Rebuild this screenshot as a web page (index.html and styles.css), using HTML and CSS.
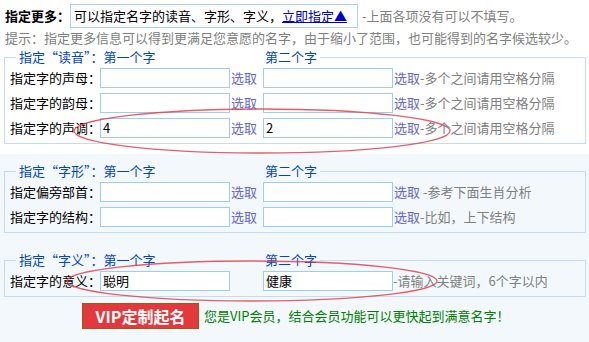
FILE: index.html
```html
<!DOCTYPE html>
<html lang="zh-CN">
<head>
<meta charset="utf-8">
<title>指定更多</title>
<link rel="stylesheet" href="styles.css">
</head>
<body>
<div class="page">
  <div class="more-row">
    <span class="more-label">指定更多：</span>
    <span class="more-box">可以指定名字的读音、字形、字义，<a class="now-link" href="#">立即指定▲</a></span>
    <span class="note more-note">-上面各项没有可以不填写。</span>
  </div>
  <div class="hint">提示：指定更多信息可以得到更满足您意愿的名字，由于缩小了范围，也可能得到的名字候选较少。</div>

  <fieldset class="group">
    <legend class="group-title"><span class="title-first">指定“读音”：第一个字</span><span>第二个字</span></legend>
    <div class="field-row">
      <span class="field-label">指定字的声母：</span>
      <input class="field-input" type="text">
      <span class="pick-slot">选取</span>
      <input class="field-input" type="text">
      <span class="pick">选取</span><span class="note">-多个之间请用空格分隔</span>
    </div>
    <div class="field-row">
      <span class="field-label">指定字的韵母：</span>
      <input class="field-input" type="text">
      <span class="pick-slot">选取</span>
      <input class="field-input" type="text">
      <span class="pick">选取</span><span class="note">-多个之间请用空格分隔</span>
    </div>
    <div class="field-row">
      <span class="field-label">指定字的声调：</span>
      <input class="field-input" type="text" value="4">
      <span class="pick-slot">选取</span>
      <input class="field-input" type="text" value="2">
      <span class="pick">选取</span><span class="note">-多个之间请用空格分隔</span>
    </div>
  </fieldset>

  <fieldset class="group group-next">
    <legend class="group-title"><span class="title-first">指定“字形”：第一个字</span><span>第二个字</span></legend>
    <div class="field-row">
      <span class="field-label">指定偏旁部首：</span>
      <input class="field-input" type="text">
      <span class="pick-slot">选取</span>
      <input class="field-input" type="text">
      <span class="pick">选取</span><span class="note">&nbsp;-参考下面生肖分析</span>
    </div>
    <div class="field-row">
      <span class="field-label">指定字的结构：</span>
      <input class="field-input" type="text">
      <span class="pick-slot">选取</span>
      <input class="field-input" type="text">
      <span class="pick">选取</span><span class="note">-比如，上下结构</span>
    </div>
  </fieldset>

  <fieldset class="group group-next">
    <legend class="group-title"><span class="title-first">指定“字义”：第一个字</span><span>第二个字</span></legend>
    <div class="field-row">
      <span class="field-label">指定字的意义：</span>
      <input class="field-input" type="text" value="聪明">
      <span class="pick-slot"></span>
      <input class="field-input" type="text" value="健康">
      <span class="note">-请输入关键词，6个字以内</span>
    </div>
  </fieldset>

  <div class="submit-row">
    <button class="vip-button" type="button">VIP定制起名</button>
    <span class="vip-tip">您是VIP会员，结合会员功能可以更快起到满意名字！</span>
  </div>

  <svg class="marks" width="589" height="342" viewBox="0 0 589 342" aria-hidden="true">
    <ellipse cx="262" cy="127" rx="188" ry="22" />
    <ellipse cx="252" cy="277" rx="185" ry="20" />
  </svg>
</div>
</body>
</html>
```

FILE: styles.css
```css
html, body {
  margin: 0;
  padding: 0;
}

body {
  font: 13px/14px "Noto Sans CJK SC", "Liberation Sans", sans-serif;
  color: #000;
  background: linear-gradient(#ffffff 0, #ffffff 154px, #f3f8fd 154px);
  width: 589px;
  height: 342px;
  overflow: hidden;
}

.page {
  position: relative;
  width: 589px;
  height: 342px;
}

.more-row {
  display: flex;
  align-items: center;
  height: 24px;
  margin-top: 4px;
  padding-left: 5px;
  white-space: nowrap;
}

.more-label {
  font-weight: bold;
  width: 65px;
  flex: none;
}

.more-box {
  box-sizing: border-box;
  display: flex;
  align-items: center;
  width: 288px;
  height: 24px;
  padding-left: 3px;
  border: 1px solid #a9d1ec;
  flex: none;
}

.now-link {
  color: #0000cc;
  text-decoration: underline;
}

.note {
  color: #808080;
  white-space: nowrap;
}

.more-note {
  margin-left: 4px;
}

.hint {
  color: #808080;
  padding-left: 5px;
  margin-top: 3px;
  height: 14px;
  white-space: nowrap;
}

.group {
  margin: 5px 3px 0 4px;
  padding: 1px 5px 3px;
  border: 1px solid #c6dbef;
  min-width: 0;
}

.group-next {
  margin-top: 20px;
}

.group-title {
  margin-left: 6px;
  padding: 0 3px;
  color: #0044cc;
  line-height: 14px;
  white-space: nowrap;
  font-feature-settings: "fwid" 1;
}

.title-first {
  display: inline-block;
  width: 246px;
}

.field-row {
  display: flex;
  align-items: center;
  height: 25px;
  white-space: nowrap;
}

.field-label {
  width: 90px;
  flex: none;
}

.field-input {
  box-sizing: border-box;
  width: 130px;
  height: 20px;
  margin: 0;
  padding: 0 2px;
  border: 1px solid #9dcdf7;
  background: #fff;
  font: 13px "Noto Sans CJK SC", "Liberation Sans", sans-serif;
  color: #000;
  flex: none;
  outline: none;
}

.pick-slot {
  box-sizing: border-box;
  width: 33px;
  padding-left: 1px;
  color: #6666cc;
  flex: none;
}

.pick {
  margin-left: 1px;
  color: #6666cc;
}

.submit-row {
  display: flex;
  align-items: center;
  margin-top: 6px;
  padding-left: 82px;
}

.vip-button {
  box-sizing: border-box;
  width: 117px;
  height: 26px;
  margin: 0;
  padding: 0;
  border: 1px solid #9b5b14;
  background: #e4393c;
  color: #fff;
  font: bold 16px/24px "Noto Sans CJK SC", "Liberation Sans", sans-serif;
}

.vip-tip {
  margin-left: 5px;
  color: #008000;
  white-space: nowrap;
}

.marks {
  position: absolute;
  left: 0;
  top: 0;
  pointer-events: none;
}

.marks ellipse {
  fill: none;
  stroke: #e0434f;
  stroke-width: 1.3;
  opacity: 0.85;
}
```
